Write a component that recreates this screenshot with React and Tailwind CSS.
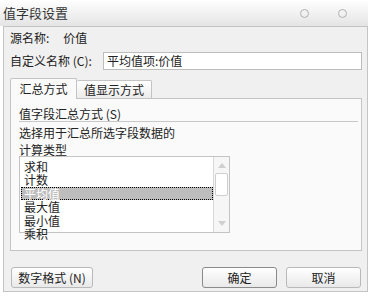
import React from "react";

const items = ["求和", "计数", "平均值", "最大值", "最小值", "乘积"];

const Btn = ({ children, primary, className }) => (
  <div
    className={`flex h-[21px] items-center justify-center rounded-[3px] border bg-gradient-to-b from-white to-[#e9e9e9] text-[12px] text-[#222] ${
      primary ? "border-[#8a8a8a]" : "border-[#b9b9b9]"
    } ${className}`}
  >
    {children}
  </div>
);

export default function App() {
  return (
    <div
      className="h-[296px] w-[368px] overflow-hidden bg-white text-[#222]"
      style={{ fontFamily: '"Noto Sans CJK SC", "Liberation Sans", sans-serif' }}
    >
      {/* title bar */}
      <div className="flex h-[26px] items-center bg-gradient-to-b from-white to-[#e4e4e4] pl-[3px]">
        <span className="text-[13px] text-[#333]">值字段设置</span>
        <div className="ml-auto flex items-center gap-[29px] pr-[21px]">
          <div className="h-[9px] w-[9px] rounded-full border border-[#b0b0b0]" />
          <div className="h-[9px] w-[9px] rounded-full border border-[#b0b0b0]" />
        </div>
      </div>

      {/* body */}
      <div className="ml-[3px] flex h-[266px] w-[365px] flex-col border border-[#c4c4c4] bg-[#f0f0f0]">
        <div className="mt-[1px] flex h-[20px] items-center pl-[6px] text-[12px]">
          <span>源名称:</span>
          <span className="ml-[14px]">价值</span>
        </div>

        <div className="mt-[4px] flex h-[18px] items-center pl-[6px] text-[12px]">
          <span className="w-[93px]">自定义名称 (C):</span>
          <div className="flex h-[18px] w-[259px] items-center border border-[#bdbdbd] bg-white pl-[3px]">
            平均值项:价值
          </div>
        </div>

        {/* tabs */}
        <div className="ml-[6px] mt-[8px] flex items-end">
          <div className="relative z-10 -mb-px flex h-[21px] w-[67px] items-center justify-center rounded-t-[2px] border border-b-0 border-[#c4c4c4] bg-[#fafafa] text-[12px]">
            汇总方式
          </div>
          <div className="flex h-[18px] w-[75px] items-center justify-center rounded-t-[2px] border border-b-0 border-l-0 border-[#c4c4c4] bg-gradient-to-b from-white to-[#ececec] text-[12px]">
            值显示方式
          </div>
        </div>
        <div className="ml-[6px] flex h-[153px] w-[352px] flex-col border border-[#c4c4c4] bg-[#fafafa] pl-[8px]">
          <div className="mt-[8px] flex h-[14px] items-center text-[12px]">值字段汇总方式 (S)</div>
          <div className="mr-[3px] h-px bg-[#c8c8c8]" />
          <div className="mt-[2px] text-[12px] leading-[17px]">
            选择用于汇总所选字段数据的
            <br />
            计算类型
          </div>
          <div className="-mt-[2px] flex h-[77px] w-[211px] border border-[#c4c4c4] bg-white">
            <div className="flex-1 pt-[3px] text-[12px] leading-[11.4px]">
              {items.map((it, i) => (
                <div
                  key={it}
                  className={
                    i === 2
                      ? "ml-px border border-dotted border-black bg-[#bdbdbd] pl-[2px] text-white"
                      : "ml-px border border-transparent pl-[2px]"
                  }
                >
                  {it}
                </div>
              ))}
            </div>
            <div className="relative w-[16px] border-l border-[#d8d8d8] bg-[#f6f6f6]">
              <div className="absolute left-[4px] top-[6px] h-0 w-0 border-x-[4px] border-b-[5px] border-x-transparent border-b-[#cfcfcf]" />
              <div className="absolute left-[1px] top-[16px] h-[23px] w-[13px] rounded-[2px] border border-[#cfcfcf] bg-white" />
              <div className="absolute bottom-[6px] left-[4px] h-0 w-0 border-x-[4px] border-t-[5px] border-x-transparent border-t-[#cfcfcf]" />
            </div>
          </div>
        </div>

        {/* buttons */}
        <div className="mt-[16px] flex items-center pl-[7px]">
          <Btn className="w-[82px]">数字格式 (N)</Btn>
          <Btn primary className="ml-[109px] w-[75px]">确定</Btn>
          <Btn className="ml-[9px] w-[75px]">取消</Btn>
        </div>
      </div>
    </div>
  );
}
